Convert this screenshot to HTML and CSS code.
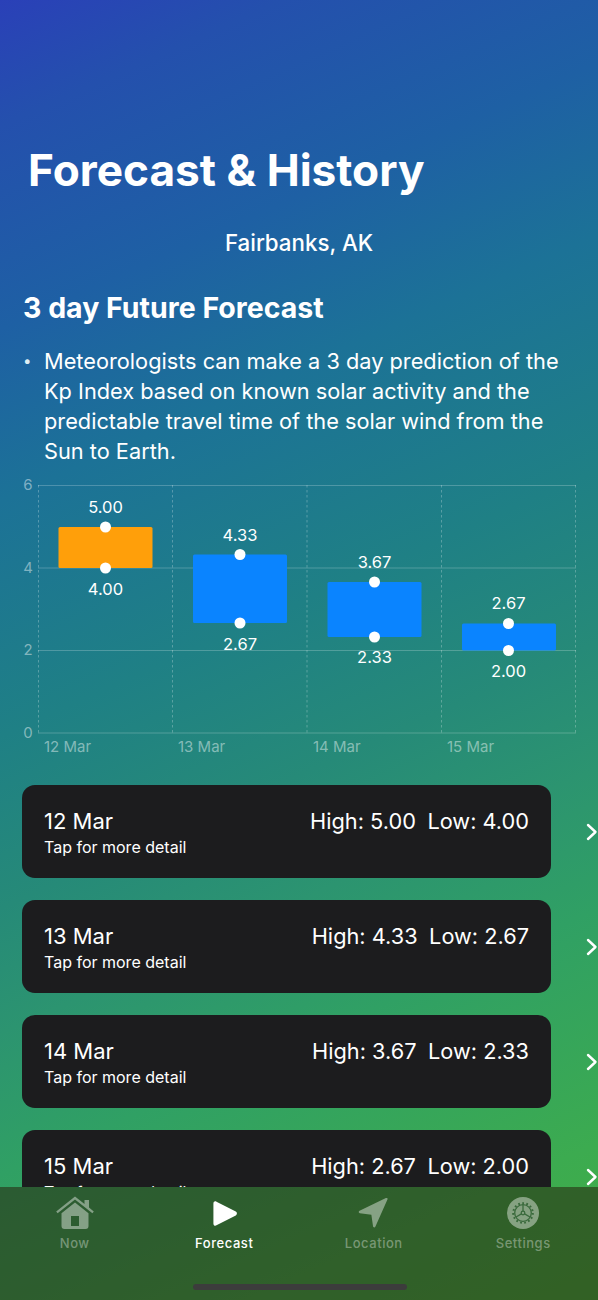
FILE: index.html
```html
<!DOCTYPE html>
<html lang="en">
<head>
<meta charset="utf-8">
<title>Forecast &amp; History</title>
<link rel="stylesheet" href="styles.css">
</head>
<body>
<div class="screen">
  <main class="content">
    <h1 class="title">Forecast &amp; History</h1>
    <p class="place">Fairbanks, AK</p>
    <h2 class="section">3 day Future Forecast</h2>
    <div class="bullet">
      <span class="dot">•</span>
      <p class="bullet-text">Meteorologists can make a 3 day prediction of the Kp Index based on known solar activity and the predictable travel time of the solar wind from the Sun to Earth.</p>
    </div>
    <svg class="chart" width="598" height="290" viewBox="0 0 598 290">
      <g class="grid">
        <line x1="38" y1="10.5" x2="576" y2="10.5"/>
        <line x1="38" y1="93" x2="576" y2="93"/>
        <line x1="38" y1="175.5" x2="576" y2="175.5"/>
        <line x1="38" y1="258" x2="576" y2="258"/>
      </g>
      <g class="grid dashed">
        <line x1="38.5" y1="10" x2="38.5" y2="258"/>
        <line x1="172.5" y1="10" x2="172.5" y2="258"/>
        <line x1="307" y1="10" x2="307" y2="258"/>
        <line x1="441.5" y1="10" x2="441.5" y2="258"/>
        <line x1="575.5" y1="10" x2="575.5" y2="258"/>
      </g>
      <g class="axis">
        <text x="28" y="15" text-anchor="middle">6</text>
        <text x="28" y="98" text-anchor="middle">4</text>
        <text x="28" y="180" text-anchor="middle">2</text>
        <text x="28" y="263" text-anchor="middle">0</text>
        <text x="44" y="277">12 Mar</text>
        <text x="178" y="277">13 Mar</text>
        <text x="313" y="277">14 Mar</text>
        <text x="447" y="277">15 Mar</text>
      </g>
      <rect class="bar-orange" x="58.5" y="52" width="94" height="41" rx="1.5"/>
      <rect class="bar-blue" x="193" y="79.5" width="94" height="68.5" rx="1.5"/>
      <rect class="bar-blue" x="327.5" y="107" width="94" height="55" rx="1.5"/>
      <rect class="bar-blue" x="462" y="148.5" width="94" height="27" rx="1.5"/>
      <g class="points">
        <circle cx="105.5" cy="52" r="5.5"/><circle cx="105.5" cy="93" r="5.5"/>
        <circle cx="240" cy="79.5" r="5.5"/><circle cx="240" cy="148" r="5.5"/>
        <circle cx="374.500" cy="107" r="5.5"/><circle cx="374.500" cy="162" r="5.500"/>
        <circle cx="508.500" cy="148.500" r="5.500"/><circle cx="508.500" cy="175.500" r="5.500"/>
      </g>
      <g class="values" text-anchor="middle">
        <text x="105.500" y="37.500">5.00</text><text x="105.500" y="119.500">4.00</text>
        <text x="240" y="65.500">4.33</text><text x="240" y="174.500">2.67</text>
        <text x="374.500" y="92.500">3.67</text><text x="374.500" y="188">2.33</text>
        <text x="508.500" y="133.500">2.67</text><text x="508.500" y="201.500">2.00</text>
      </g>
    </svg>
    <ul class="days">
      <li class="day">
        <div class="card">
          <div class="card-top"><span class="date">12 Mar</span><span class="range"><span>High: 5.00</span><span>Low: 4.00</span></span></div>
          <div class="hint">Tap for more detail</div>
        </div>
        <svg class="chev" width="12" height="18" viewBox="0 0 12 18"><path d="M2 2l7.500 7-7.500 7"/></svg>
      </li>
      <li class="day">
        <div class="card">
          <div class="card-top"><span class="date">13 Mar</span><span class="range"><span>High: 4.33</span><span>Low: 2.67</span></span></div>
          <div class="hint">Tap for more detail</div>
        </div>
        <svg class="chev" width="12" height="18" viewBox="0 0 12 18"><path d="M2 2l7.500 7-7.500 7"/></svg>
      </li>
      <li class="day">
        <div class="card">
          <div class="card-top"><span class="date">14 Mar</span><span class="range"><span>High: 3.67</span><span>Low: 2.33</span></span></div>
          <div class="hint">Tap for more detail</div>
        </div>
        <svg class="chev" width="12" height="18" viewBox="0 0 12 18"><path d="M2 2l7.500 7-7.500 7"/></svg>
      </li>
      <li class="day">
        <div class="card">
          <div class="card-top"><span class="date">15 Mar</span><span class="range"><span>High: 2.67</span><span>Low: 2.00</span></span></div>
          <div class="hint">Tap for more detail</div>
        </div>
        <svg class="chev" width="12" height="18" viewBox="0 0 12 18"><path d="M2 2l7.500 7-7.500 7"/></svg>
      </li>
    </ul>
  </main>
  <nav class="tabbar">
    <div class="tabs">
      <a class="tab">
        <span class="icon-slot">
          <svg class="tab-icon" width="38" height="34" viewBox="0 0 38 34"><path d="M19 .5L28.500 8V4h4.500v7.500L37.800 15.500l-1.400 1.800L19 3.500 1.600 17.300.2 15.500z"/><path fill-rule="evenodd" d="M19 6.500L5.500 17.200V30c0 2 1 3 3 3h21c2 0 3-1 3-3V17.200zM15 20h8v10h-8z"/></svg>
        </span>
        <span>Now</span>
      </a>
      <a class="tab active">
        <span class="icon-slot">
          <svg class="tab-icon" width="27" height="27" viewBox="0 0 28 28"><path d="M2.500 3.500c0-1.800 1.700-2.600 3.200-1.800l20 10.300c1.600.9 1.600 3.100 0 4L5.700 26.300c-1.500.8-3.200 0-3.200-1.800z"/></svg>
        </span>
        <span>Forecast</span>
      </a>
      <a class="tab">
        <span class="icon-slot">
          <svg class="tab-icon" width="31" height="31" viewBox="0 0 32 32"><path d="M30.500 1.200L18 29.500c-.6 1.300-2.300 1.100-2.500-.3l-1.700-12-11.800-1.500c-1.400-.2-1.700-1.900-.4-2.500L28.800.1c1.100-.4 2.100.4 1.700 1.100z"/></svg>
        </span>
        <span>Location</span>
      </a>
      <a class="tab">
        <span class="icon-slot">
          <svg class="tab-icon" width="32" height="32" viewBox="0 0 32 32">
            <circle cx="16" cy="16" r="16"/>
            <g class="gear">
              <circle cx="16" cy="16" r="8.300"/>
              <circle class="tooth" cx="16" cy="16" r="9.800"/>
              <circle cx="16" cy="16" r="1.800"/>
              <path d="M16 14.200V8M14.400 16.900l-5.400 3.100M17.600 16.900l5.400 3.100"/>
            </g>
          </svg>
        </span>
        <span>Settings</span>
      </a>
    </div>
    <div class="home-bar"></div>
  </nav>
</div>
</body>
</html>
```
FILE: styles.css
```css
* { box-sizing: border-box; }
html, body { margin: 0; padding: 0; }
body { font-family: Inter, "Liberation Sans", sans-serif; color: #fff; }
.screen {
  position: relative;
  width: 598px;
  height: 1300px;
  overflow: hidden;
  background: linear-gradient(156deg, #2a40b8 0%, #2450ad 8%, #1e60a4 21%, #1c7297 32%, #1f8085 47%, #268a78 58%, #2c9470 66%, #30a064 75%, #3cab50 90%, #42ae42 100%);
}
.content { height: 1187px; overflow: hidden; padding-top: 145px; }
.title {
  margin: 0 0 0 28px;
  font-size: 44.200px;
  line-height: 50px;
  font-weight: 700;
}
.place {
  margin: 34px 0 0;
  text-align: center;
  font-size: 22.300px;
  line-height: 28px;
  font-weight: 500;
}
.section {
  margin: 34px 0 0 23px;
  font-size: 28.500px;
  line-height: 34px;
  font-weight: 700;
}
.bullet { display: flex; margin: 21px 30px 0 23px; }
.dot { width: 21px; font-size: 15px; line-height: 30px; color: #dfeef2; }
.bullet-text { margin: 0; font-size: 21.750px; line-height: 30px; font-weight: 400; flex: 1; }
.chart { display: block; margin-top: 9px; }
.grid line { stroke: rgba(255,255,255,.22); stroke-width: 1; }
.dashed line { stroke-dasharray: 2.500 2.500; stroke: rgba(255,255,255,.26); }
.axis text { fill: rgba(255,255,255,.45); font-size: 15px; }
.bar-orange { fill: #ff9f0a; }
.bar-blue { fill: #0a84ff; }
.points circle { fill: #fff; }
.values text { fill: #fff; font-size: 16.500px; }
.days { list-style: none; margin: 20px 0 0; padding: 0 0 0 22px; display: flex; flex-direction: column; gap: 22px; }
.day { display: flex; align-items: center; flex: none; }
.card {
  width: 529px;
  height: 93px;
  flex: none;
  background: #1c1c1e;
  border-radius: 13px;
  padding: 21px 22px 0;
}
.card-top { display: flex; justify-content: space-between; align-items: baseline; }
.date { font-size: 22px; line-height: 30px; }
.range { display: flex; gap: 11.500px; font-size: 21.750px; line-height: 30px; }
.hint { font-size: 16px; line-height: 20px; margin-top: 1px; }
.chev { flex: none; margin-left: 35px; }
.chev path { fill: none; stroke: #fff; stroke-width: 2.400; stroke-linecap: round; stroke-linejoin: round; }
.tabbar {
  position: absolute;
  left: 0;
  right: 0;
  bottom: 0;
  height: 113px;
  background: rgba(38,38,14,.57);
}
.tabs { display: grid; grid-template-columns: repeat(4, 149.500px); }
.tab {
  display: flex;
  flex-direction: column;
  align-items: center;
  padding-top: 9px;
  font-size: 13px;
  line-height: 16px;
  font-weight: 500;
  letter-spacing: .55px;
  color: rgba(255,255,255,.36);
  gap: 5px;
}
.icon-slot { height: 34px; display: flex; align-items: center; justify-content: center; }
.tab-icon { fill: rgba(255,255,255,.42); display: block; }
.tab.active { color: #fff; }
.tab.active .tab-icon { fill: #fff; }
.gear { fill: none; stroke: #3a6a3c; stroke-width: 1.300; }
.gear .tooth { stroke-width: 2; stroke-dasharray: 1.800 2.300; }
.home-bar {
  position: absolute;
  left: 193px;
  bottom: 10px;
  width: 214px;
  height: 6px;
  border-radius: 3px;
  background: #3c3c3c;
}
```
